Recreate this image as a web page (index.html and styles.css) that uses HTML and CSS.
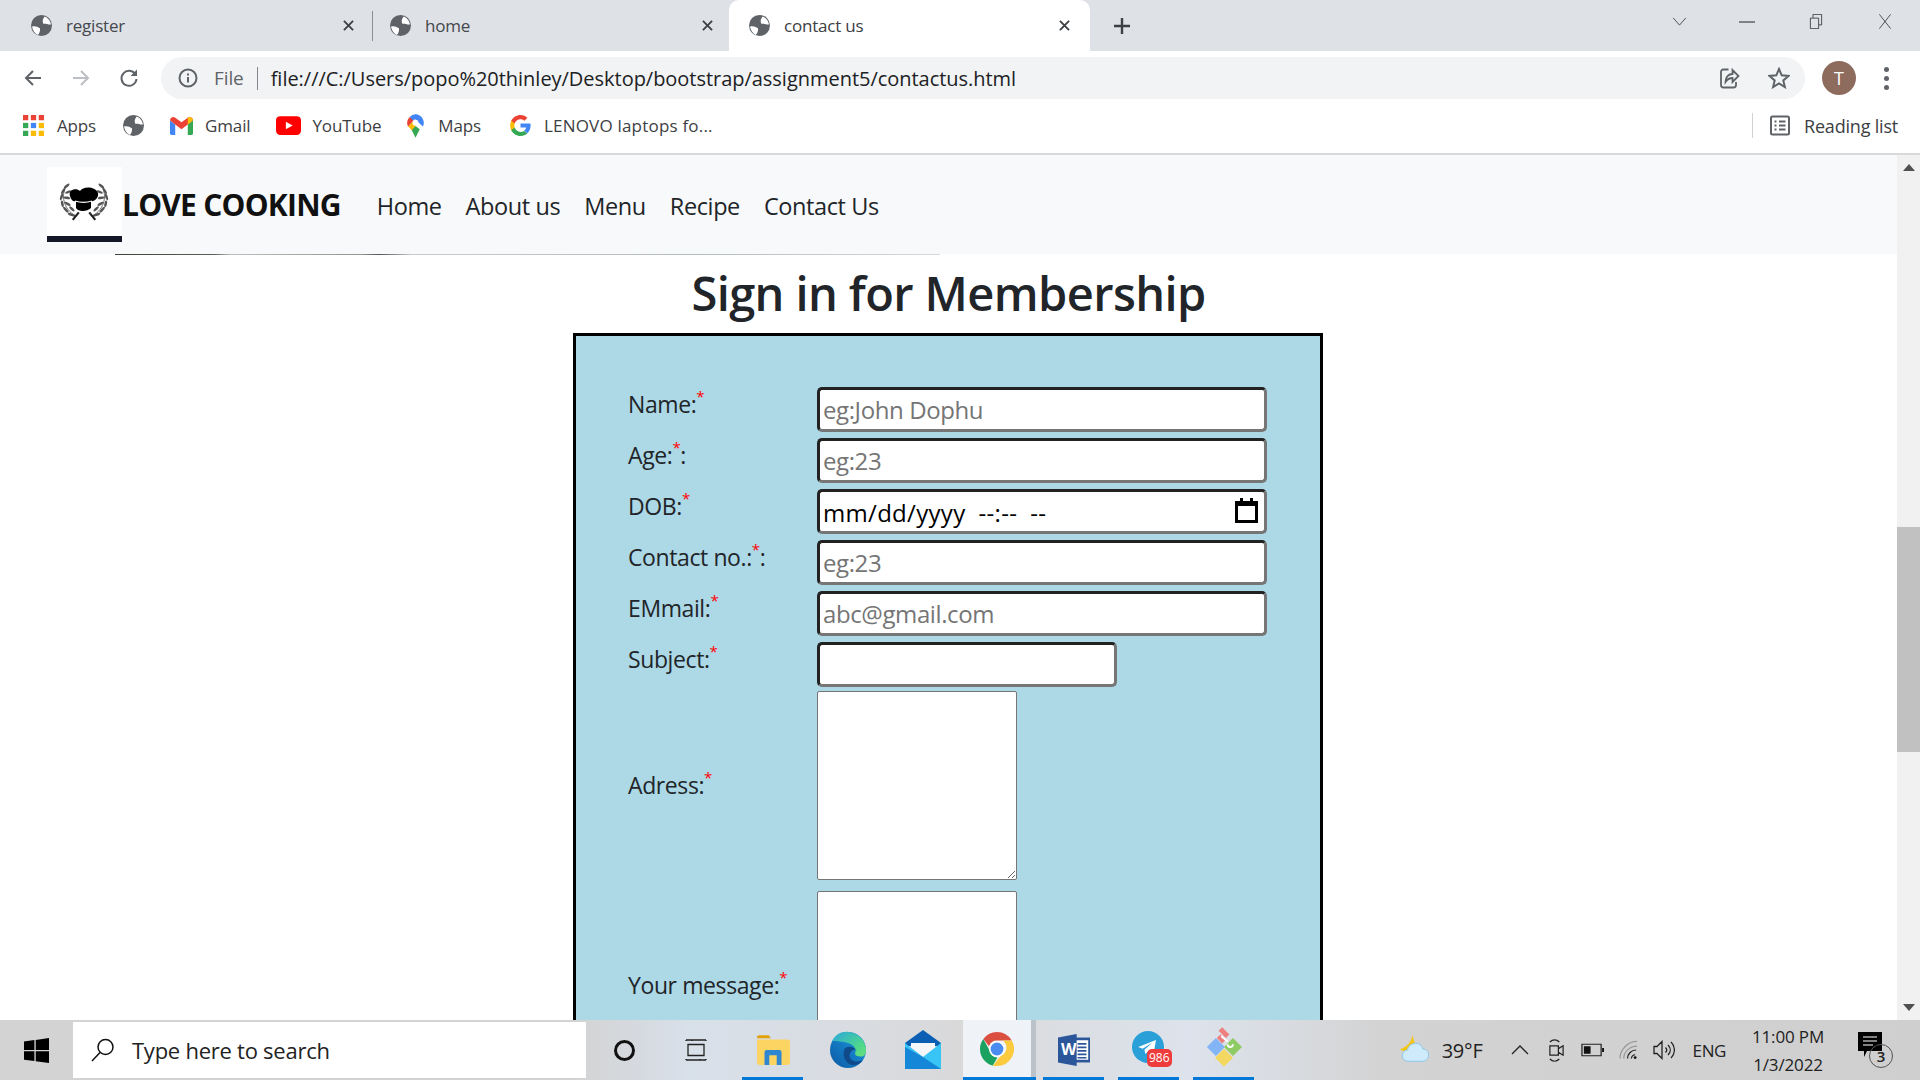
FILE: index.html
```html
<!DOCTYPE html>
<html lang="en">
<head>
    <meta charset="UTF-8">
    <meta name="viewport" content="width=device-width, initial-scale=1.0">
    <title>contact us</title>
    <link rel="stylesheet" href="styles.css">
</head>
<body>
    <svg class="defs" width="0" height="0">
        <symbol id="globe" viewBox="0 0 20 20">
            <circle cx="10" cy="10" r="10" fill="#5f6368"/>
            <path d="M13 1.500C16 2.500 18.500 5.500 19 9 16.500 9.500 14 8 12 8.500 10.500 6.500 11 4 13 1.500zM1 11C3.500 10 6 11 8.500 12.500 9 15 8 17.500 6.500 19 3.500 17.500 1.500 14.500 1 11z" fill="#fff"/>
        </symbol>
    </svg>

    <div class="window">
        <div class="tabbar">
            <div class="tab">
                <svg class="fav"><use href="#globe"/></svg>
                <span class="tab-title">register</span>
                <svg class="tab-x" viewBox="0 0 12 12"><path d="M1 1l10 10M11 1L1 11"/></svg>
            </div>
            <div class="tab-sep"></div>
            <div class="tab">
                <svg class="fav"><use href="#globe"/></svg>
                <span class="tab-title">home</span>
                <svg class="tab-x" viewBox="0 0 12 12"><path d="M1 1l10 10M11 1L1 11"/></svg>
            </div>
            <div class="tab tab-active">
                <svg class="fav"><use href="#globe"/></svg>
                <span class="tab-title">contact us</span>
                <svg class="tab-x" viewBox="0 0 12 12"><path d="M1 1l10 10M11 1L1 11"/></svg>
            </div>
            <svg class="new-tab" viewBox="0 0 16 16"><path d="M8 0v16M0 8h16"/></svg>
            <div class="win-controls">
                <svg class="wc wc-chev" viewBox="0 0 16 10"><path d="M1 1l7 8 7-8"/></svg>
                <svg class="wc wc-min" viewBox="0 0 16 16"><path d="M0 8h16"/></svg>
                <svg class="wc wc-max" viewBox="0 0 16 20"><path d="M.5 5.500h11v14H.5zM4 5V.5h11.500v14H12"/></svg>
                <svg class="wc wc-close" viewBox="0 0 16 20"><path d="M.5 .5l15 19M15.500 .5L.5 19.500"/></svg>
            </div>
        </div>

        <div class="toolbar">
            <svg class="nav-ic" viewBox="0 0 20 20"><path d="M18 10H3M10 3l-7 7 7 7"/></svg>
            <svg class="nav-ic nav-off" viewBox="0 0 20 20"><path d="M2 10h15M10 3l7 7-7 7"/></svg>
            <svg class="nav-ic" viewBox="0 0 20 20"><path d="M16.500 6.500A7.500 7.500 0 1 0 17.500 11"/><path class="solid" d="M18 1.500v6.500h-6.500z"/></svg>
            <div class="omnibox">
                <svg class="info" viewBox="0 0 20 20"><circle cx="10" cy="10" r="8.500"/><path d="M10 9v5.500M10 5.500v2"/></svg>
                <span class="file-tag">File</span>
                <span class="omni-sep"></span>
                <span class="url">file:///C:/Users/popo%20thinley/Desktop/bootstrap/assignment5/contactus.html</span>
                <svg class="omni-ic share" viewBox="0 0 20 22"><path d="M9 2.500H4a2.500 2.500 0 0 0-2.500 2.500v13A2.500 2.500 0 0 0 4 20.500h10a2.500 2.500 0 0 0 2.500-2.500v-3"/><path d="M6 15c0-5 3-8 7-8V3l6 6-6 6v-4c-3 0-5 1-7 4z"/></svg>
                <svg class="omni-ic star" viewBox="0 0 22 22"><path d="M11 2l2.700 6.300 6.800.6-5.200 4.500 1.600 6.700L11 16.500 5.100 20.100l1.600-6.700L1.500 8.900l6.800-.6z"/></svg>
            </div>
            <div class="avatar">T</div>
            <div class="kebab"><i></i><i></i><i></i></div>
        </div>

        <div class="bookmarks">
            <div class="bm bm-apps">
                <svg class="bm-ic" viewBox="0 0 20 20">
                    <path fill="#ea4335" d="M0 0h5v5H0zM7.500 0h5v5h-5zM15 0h5v5h-5z"/>
                    <path fill="#34a853" d="M0 7.500h5v5H0z"/><path fill="#4285f4" d="M7.500 7.500h5v5h-5z"/><path fill="#fbbc05" d="M15 7.500h5v5h-5z"/>
                    <path fill="#34a853" d="M0 15h5v5H0z"/><path fill="#fbbc05" d="M7.500 15h5v5h-5zM15 15h5v5h-5z"/>
                </svg>
                <span>Apps</span>
            </div>
            <div class="bm"><svg class="bm-ic"><use href="#globe"/></svg></div>
            <div class="bm">
                <svg class="bm-ic gmail" viewBox="0 0 22 17">
                    <path fill="#4285f4" d="M0 3v12.500A1.500 1.500 0 0 0 1.500 17H5V7z"/>
                    <path fill="#34a853" d="M17 7v10h3.500a1.500 1.500 0 0 0 1.500-1.500V3z"/>
                    <path fill="#ea4335" d="M0 3c0-2.500 3-4 5-2.500L11 5l6-4.500c2-1.500 5 0 5 2.500l-5 4-6 4.500L5 7z"/>
                    <path fill="#fbbc05" d="M17 .5c2-1.500 5 0 5 2.500l-5 4z"/>
                </svg>
                <span>Gmail</span>
            </div>
            <div class="bm">
                <svg class="bm-ic yt" viewBox="0 0 24 18"><rect width="24" height="18" rx="4" fill="#f00"/><path d="M9.500 5.500l6.500 3.500-6.500 3.500z" fill="#fff"/></svg>
                <span>YouTube</span>
            </div>
            <div class="bm bm-maps">
                <svg class="bm-ic maps" viewBox="0 0 16 22">
                    <path fill="#34a853" d="M4 14l4 8 4-8-4-3z"/>
                    <path fill="#fbbc05" d="M1 11.500L4.500 15l6-7-4.500-2z"/>
                    <path fill="#4285f4" d="M8 0a8 8 0 0 1 7 11.500L10 7 6 3z"/>
                    <path fill="#ea4335" d="M2 3a8 8 0 0 0-1 8.500L6 6l3-4z"/>
                    <path fill="#4285f4" d="M2.500 2.500A8 8 0 0 1 8 0l2 1.500L6 6z"/>
                    <circle cx="8" cy="8" r="2.800" fill="#fff"/>
                </svg>
                <span>Maps</span>
            </div>
            <div class="bm bm-lenovo">
                <svg class="bm-ic" viewBox="0 0 20 20">
                    <path fill="#4285f4" d="M19.600 10.200c0-.7-.1-1.400-.2-2H10v3.800h5.400c-.2 1.200-.9 2.300-2 3l3.100 2.400c1.900-1.700 3.100-4.300 3.100-7.200z"/>
                    <path fill="#34a853" d="M10 20c2.700 0 4.900-.9 6.500-2.400l-3.100-2.400c-.9.600-2 .9-3.400.9-2.600 0-4.800-1.700-5.600-4.100H1.200v2.500C2.800 17.800 6.200 20 10 20z"/>
                    <path fill="#fbbc05" d="M4.400 12c-.4-1.200-.4-2.800 0-4V5.500H1.200c-1.400 2.700-1.400 6.300 0 9z"/>
                    <path fill="#ea4335" d="M10 4c1.500 0 2.800.5 3.800 1.500l2.800-2.800C14.900 1 12.700 0 10 0 6.200 0 2.800 2.200 1.200 5.500L4.400 8C5.200 5.700 7.400 4 10 4z"/>
                </svg>
                <span>LENOVO laptops fo...</span>
            </div>
            <div class="reading">
                <svg class="read-ic" viewBox="0 0 20 20"><rect x="1" y="1" width="18" height="18" rx="1.500"/><path d="M4.500 6h2M9 6h6.500M4.500 10h2M9 10h6.500M4.500 14h2M9 14h6.500"/></svg>
                <span>Reading list</span>
            </div>
        </div>

        <div class="viewport">
            <div class="page">
                <nav class="navbar">
                    <div class="logo">
                        <svg class="logo-art" viewBox="0 0 75 69">
                            <g class="wreath" transform="translate(11 13) scale(.867 .85)">
                                <path d="M10 6C3 18 6 34 20 42M50 6c7 12 4 28-10 36"/>
                                <g class="leaves">
                                    <ellipse cx="10" cy="7" rx="4" ry="1.500" transform="rotate(-40 10 7)"/>
                                    <ellipse cx="6" cy="13" rx="4" ry="1.500" transform="rotate(-60 6 13)"/>
                                    <ellipse cx="12" cy="14" rx="4" ry="1.500" transform="rotate(-20 12 14)"/>
                                    <ellipse cx="4" cy="20" rx="4" ry="1.500" transform="rotate(-75 4 20)"/>
                                    <ellipse cx="10" cy="21" rx="4" ry="1.500" transform="rotate(10 10 21)"/>
                                    <ellipse cx="5" cy="28" rx="4" ry="1.500" transform="rotate(-100 5 28)"/>
                                    <ellipse cx="11" cy="28" rx="4" ry="1.500" transform="rotate(30 11 28)"/>
                                    <ellipse cx="9" cy="35" rx="4.500" ry="1.500" transform="rotate(-130 9 35)"/>
                                    <ellipse cx="16" cy="34" rx="4" ry="1.500" transform="rotate(45 16 34)"/>
                                    <ellipse cx="16" cy="41" rx="5" ry="1.500" transform="rotate(20 16 41)"/>
                                    <ellipse cx="50" cy="7" rx="4" ry="1.500" transform="rotate(40 50 7)"/>
                                    <ellipse cx="54" cy="13" rx="4" ry="1.500" transform="rotate(60 54 13)"/>
                                    <ellipse cx="48" cy="14" rx="4" ry="1.500" transform="rotate(20 48 14)"/>
                                    <ellipse cx="56" cy="20" rx="4" ry="1.500" transform="rotate(75 56 20)"/>
                                    <ellipse cx="50" cy="21" rx="4" ry="1.500" transform="rotate(-10 50 21)"/>
                                    <ellipse cx="55" cy="28" rx="4" ry="1.500" transform="rotate(100 55 28)"/>
                                    <ellipse cx="49" cy="28" rx="4" ry="1.500" transform="rotate(-30 49 28)"/>
                                    <ellipse cx="51" cy="35" rx="4.500" ry="1.500" transform="rotate(130 51 35)"/>
                                    <ellipse cx="44" cy="34" rx="4" ry="1.500" transform="rotate(-45 44 34)"/>
                                    <ellipse cx="44" cy="41" rx="5" ry="1.500" transform="rotate(-20 44 41)"/>
                                </g>
                                <path class="stems" d="M24 38l-7 9M36 38l7 9"/>
                            </g>
                            <path d="M23 29C21 23 29 20 33 24 36 19 48 19 51 26 52 31 47 35 44 34L44 41C40 45 31 45 29 41L29 34C26 35 24 33 23 29z"/>
                            <path class="hat-line" d="M28 34c6 2 11 2 17 0"/>
                        </svg>
                        <div class="logo-strip"></div>
                    </div>
                    <span class="brand">LOVE COOKING</span>
                    <ul class="nav-links">
                        <li>Home</li>
                        <li>About us</li>
                        <li>Menu</li>
                        <li>Recipe</li>
                        <li>Contact Us</li>
                    </ul>
                </nav>
                <div class="banner-edge"></div>
                <h1 class="title">Sign in for Membership</h1>
                <form class="member-form">
                    <div class="row">
                        <label for="name">Name:<sup>*</sup></label>
                        <input id="name" type="text" placeholder="eg:John Dophu">
                    </div>
                    <div class="row">
                        <label for="age">Age:<sup>*</sup>:</label>
                        <input id="age" type="text" placeholder="eg:23">
                    </div>
                    <div class="row">
                        <label for="dob">DOB:<sup>*</sup></label>
                        <div class="date-field">
                            <input id="dob" type="text" value="mm/dd/yyyy  --:--  --">
                            <svg class="cal-ic" viewBox="0 0 23 25"><path d="M1.500 4.500h20v19h-20z"/><path class="cal-top" d="M1.500 3h20v5h-20zM5 0h3v3H5zM15 0h3v3h-3z"/></svg>
                        </div>
                    </div>
                    <div class="row">
                        <label for="contact">Contact no.:<sup>*</sup>:</label>
                        <input id="contact" type="text" placeholder="eg:23">
                    </div>
                    <div class="row">
                        <label for="email">EMmail:<sup>*</sup></label>
                        <input id="email" type="text" placeholder="abc@gmail.com">
                    </div>
                    <div class="row">
                        <label for="subject">Subject:<sup>*</sup></label>
                        <input id="subject" class="short" type="text">
                    </div>
                    <div class="row row-area">
                        <label for="adress">Adress:<sup>*</sup></label>
                        <textarea id="adress"></textarea>
                    </div>
                    <div class="row row-area">
                        <label for="message">Your message:<sup>*</sup></label>
                        <textarea id="message"></textarea>
                    </div>
                </form>
            </div>
            <div class="scrollbar">
                <div class="arrow-up"></div>
                <div class="thumb"></div>
                <div class="arrow-down"></div>
            </div>
        </div>

        <div class="taskbar">
            <div class="start">
                <svg class="win-logo" viewBox="0 0 26 26"><path d="M0 3.700L10.800 2.200V12.500H0zM12.200 2L26 0V12.500H12.200zM0 13.800H10.800V24L0 22.500zM12.200 13.800H26V26L12.200 24.200z"/></svg>
            </div>
            <div class="searchbox">
                <svg class="search-ic" viewBox="0 0 24 24"><circle cx="14.500" cy="9" r="7.500"/><path d="M9 14.500L1 23"/></svg>
                <span>Type here to search</span>
            </div>
            <div class="task-slot slot-cortana"><span class="ring"></span></div>
            <div class="task-slot slot-view">
                <svg class="view-ic" viewBox="0 0 24 24"><path d="M2 2h20M2 22h20M4 6.500h16v11H4z"/><path d="M2 2v1M8 2v1M22 2v1M2 21v1M16 21v1M22 21v1"/></svg>
            </div>
            <div class="task-slot slot-app running">
                <svg class="app-ic" viewBox="0 0 32 30">
                    <path fill="#e3a008" d="M1 3a2 2 0 0 1 2-2h9l2 3h-13z"/>
                    <path fill="#fcd462" d="M1 5h29a2 2 0 0 1 2 2v20a2 2 0 0 1-2 2H3a2 2 0 0 1-2-2z"/>
                    <path fill="#2f86d1" d="M8 17a2 2 0 0 1 2-2h12a2 2 0 0 1 2 2v12h-4.500v-9h-7v9H8z"/>
                </svg>
            </div>
            <div class="task-slot slot-app">
                <svg class="app-ic edge" viewBox="0 0 36 40">
                    <defs>
                        <linearGradient id="edge-a" x1="0" y1="1" x2="1" y2="0"><stop offset="0" stop-color="#0c59a4"/><stop offset="1" stop-color="#1b9de2"/></linearGradient>
                        <linearGradient id="edge-b" x1="0" y1="0" x2="1" y2="1"><stop offset="0" stop-color="#2aa6de"/><stop offset=".7" stop-color="#4fd88a"/><stop offset="1" stop-color="#6ce07a"/></linearGradient>
                    </defs>
                    <circle cx="18" cy="20" r="18" fill="url(#edge-a)"/>
                    <path fill="url(#edge-b)" d="M2 11C6 4 12 1 19 2c9 1 17 9 17 18 0 3-1 6-4 6.500-4 .5-7-1-7-3 1-2 1-5-1-7-5-5-14-5-22-5.500z"/>
                    <path fill="#114a8b" d="M14 20c-2 8 3 16 11 15 3-.5 6-2 8-5-4 2-8 2-11 0-3-2-3-6-1-8 2-3 5-3 6-1-4-6-12-5-13-1z"/>
                </svg>
            </div>
            <div class="task-slot slot-app">
                <svg class="app-ic mail" viewBox="0 0 36 40">
                    <path fill="#0a5fb4" d="M18 0l18 13v3H0v-3z"/>
                    <path fill="#f4f6f8" d="M6 13h24v8l-12 8-12-8z"/>
                    <path fill="#38c5f5" d="M0 13l18 14 18-14v26H0z"/>
                    <path fill="#1487d8" d="M0 39V17l18 10 18 12z"/>
                </svg>
            </div>
            <div class="task-slot slot-chrome">
                <svg class="app-ic chrome" viewBox="0 0 36 36">
                    <path fill="#db4f40" d="M18 0a18 18 0 0 1 15.600 9H18a9 9 0 0 0-8.500 6L3.500 7.500A18 18 0 0 1 18 0z"/>
                    <path fill="#1ba261" d="M3.500 7.500L10.500 20a9 9 0 0 0 8 7l-5 8.600C5.500 33.500 0 26.500 0 18c0-4 1.300-7.500 3.500-10.500z"/>
                    <path fill="#fcca3f" d="M33.600 9A18 18 0 0 1 18 36h-4.500l8.500-11a9 9 0 0 0 2-16z"/>
                    <circle cx="18" cy="18" r="8.500" fill="#fff"/>
                    <circle cx="18" cy="18" r="6.800" fill="#4a8cf0"/>
                </svg>
            </div>
            <div class="task-slot slot-word running">
                <svg class="app-ic word" viewBox="0 0 36 36">
                    <path fill="#fff" d="M18 4h17v28H18z"/>
                    <path fill="#2b579a" d="M18 4h18v28H18zM20 7v22h14V7z"/>
                    <path fill="#2b579a" d="M22 10h10v2H22zM22 14h10v2H22zM22 18h10v2H22zM22 22h10v2H22zM22 26h10v1.500H22z"/>
                    <path fill="#2b579a" d="M0 4l21-4v36L0 32z"/>
                    <text x="3.500" y="24" class="word-w">W</text>
                </svg>
            </div>
            <div class="task-slot slot-tele running">
                <svg class="app-ic tele" viewBox="0 0 36 36">
                    <circle cx="18" cy="18" r="18" fill="#2b9fd8"/>
                    <path fill="#fff" d="M7 18l20-8-3 17-6-4-3 3-1-5 9-8-11 7z"/>
                </svg>
                <span class="tele-badge">986</span>
            </div>
            <div class="task-slot slot-git running">
                <svg class="app-ic git" viewBox="0 0 40 44">
                    <path fill="#82b4f6" d="M11 12l10 10-10 10L1 22z"/>
                    <path fill="#8fcb63" d="M30 12l10 10-10 10-10-10z"/>
                    <path fill="#f2d861" d="M20 24l10 10-10 10-10-10z"/>
                    <path fill="#ee7f7f" d="M14 4l4-4 8 8-4 4zM12 12l4-4 6 6-4 4z"/>
                    <path fill="none" stroke="#fff" stroke-width="2" d="M17 10l7 6M24 19a3 3 0 1 0 6 0"/>
                </svg>
            </div>

            <div class="tray">
                <svg class="weather" viewBox="0 0 34 32">
                    <path fill="#f5c518" d="M15 0C15 6 10 13 2 15 6 19 16 18 19 12z"/>
                    <path fill="#cfeafa" stroke="#86c8ea" d="M11 28a6 6 0 0 1-1-12c1-6 8-9 13-6 2 1 3 3 3.500 5 4 0 6 3 6 6.500s-3 6.500-6 6.500z"/>
                </svg>
                <span class="temp">39°F</span>
                <svg class="tray-ic chev-up" viewBox="0 0 18 10"><path d="M1 9l8-8 8 8"/></svg>
                <svg class="tray-ic meet" viewBox="0 0 18 26"><path d="M2 8h9v10H2zM11 11l5-3v10l-5-3zM2 4c3-3 7-3 10 0M2 22c3 3 7 3 10 0"/></svg>
                <svg class="tray-ic batt" viewBox="0 0 24 14"><path d="M1 1h20v12H1z"/><path class="solid" d="M3 3h7v8H3zM22 5h2v4h-2z"/></svg>
                <svg class="tray-ic wifi" viewBox="0 0 20 20"><path class="dim" d="M1 19C1 10 9 1 19 1M5 19c0-7 6-13 14-13"/><path d="M9 19c0-5 4-9 9-9M13 19c0-2 2-4 4-4"/><circle class="solid" cx="17" cy="18" r="1.500"/></svg>
                <svg class="tray-ic vol" viewBox="0 0 22 20"><path d="M1 6.500h3L9 1.500v17l-5-5H1zM12.500 7.500c1.500 1.500 1.500 3.500 0 5M15 5c3 3 3 7 0 10M18 2c4.500 4.500 4.500 11.500 0 16"/></svg>
                <span class="lang">ENG</span>
                <div class="clock"><span>11:00 PM</span><span>1/3/2022</span></div>
                <div class="notif">
                    <svg class="notif-ic" viewBox="0 0 24 26"><path d="M0 0h24v19H9l-3 6v-6H0z"/><path class="notif-lines" d="M5 5h14M5 9h14M5 13h10"/></svg>
                    <span class="notif-count">3</span>
                </div>
            </div>
        </div>
    </div>
</body>
</html>
```

FILE: styles.css
```css
* {
    box-sizing: border-box;
}
html, body {
    margin: 0;
    height: 100%;
    overflow: hidden;
}
body {
    font-family: "Open Sans", "Noto Sans", sans-serif;
    color: #212529;
}
.defs {
    position: absolute;
}
.window {
    display: flex;
    flex-direction: column;
    height: 1080px;
    width: 1920px;
}

/* tab strip */
.tabbar {
    display: flex;
    align-items: center;
    height: 51px;
    background-color: #dee1e6;
    flex-shrink: 0;
}
.tab {
    display: flex;
    align-items: center;
    width: 359px;
    height: 51px;
    padding: 0 5px 0 31px;
    font-size: 17px;
    color: #45484d;
    letter-spacing: -0.2px;
}
.tab-active {
    width: 361px;
    margin-left: 11px;
    padding: 0 20px 0 20px;
    background-color: #fff;
    border-radius: 10px 10px 0 0;
    color: #3c4043;
}
.fav {
    width: 21px;
    height: 21px;
    flex-shrink: 0;
}
.tab-title {
    margin-left: 14px;
    flex: 1;
}
.tab-x {
    width: 11px;
    height: 11px;
    fill: none;
    stroke: #3c4043;
    stroke-width: 2;
}
.tab-sep {
    width: 1px;
    height: 30px;
    background-color: #8a8d91;
    margin-left: 13px;
    margin-right: -14px;
}
.new-tab {
    width: 16px;
    height: 16px;
    margin-left: 24px;
    fill: none;
    stroke: #3c4043;
    stroke-width: 2.400;
}
.win-controls {
    display: flex;
    align-items: center;
    margin-left: auto;
    margin-top: -8px;
    padding-right: 27px;
}
.wc {
    fill: none;
    stroke: #222;
    stroke-width: 1;
}
.wc-chev {
    width: 15px;
    height: 9px;
    margin-right: 52px;
    stroke: #444;
}
.wc-min {
    width: 16px;
    height: 16px;
    margin-right: 53px;
}
.wc-max {
    width: 16px;
    height: 15px;
    margin-right: 53px;
}
.wc-close {
    width: 16px;
    height: 15px;
}

/* address bar */
.toolbar {
    display: flex;
    align-items: center;
    height: 51px;
    padding: 3px 0 0 23px;
    background-color: #fff;
    flex-shrink: 0;
}
.nav-ic {
    width: 20px;
    height: 20px;
    margin-right: 28px;
    fill: none;
    stroke: #5f6368;
    stroke-width: 2;
    flex-shrink: 0;
}
.nav-off {
    stroke: #bcbfc3;
}
.nav-ic .solid {
    fill: #5f6368;
    stroke: none;
}
.omnibox {
    display: flex;
    align-items: center;
    width: 1644px;
    height: 42px;
    margin-left: -6px;
    padding: 0 10px 0 17px;
    background-color: #f1f3f4;
    border-radius: 21px;
}
.info {
    width: 20px;
    height: 20px;
    fill: none;
    stroke: #5f6368;
    stroke-width: 2;
}
.file-tag {
    margin-left: 16px;
    font-size: 19px;
    color: #5f6368;
    letter-spacing: -0.1px;
}
.omni-sep {
    width: 1px;
    height: 23px;
    margin: 0 13px;
    background-color: #80868b;
}
.url {
    font-size: 20px;
    color: #202124;
    letter-spacing: -0.03px;
    white-space: nowrap;
}
.omni-ic {
    fill: none;
    stroke: #5f6368;
    stroke-width: 1.800;
}
.share {
    width: 21px;
    height: 22px;
    margin-left: auto;
    margin-right: 28px;
}
.star {
    width: 22px;
    height: 22px;
    margin-right: 5px;
    stroke-width: 2;
}
.avatar {
    display: flex;
    align-items: center;
    justify-content: center;
    width: 34px;
    height: 34px;
    margin-left: 17px;
    border-radius: 50%;
    background-color: #8d6b5d;
    color: #fff;
    font-size: 18px;
}
.kebab {
    display: flex;
    flex-direction: column;
    gap: 4px;
    margin-left: 28px;
}
.kebab i {
    width: 5px;
    height: 5px;
    border-radius: 50%;
    background-color: #5f6368;
}

/* bookmarks bar */
.bookmarks {
    display: flex;
    align-items: center;
    height: 53px;
    padding: 0 0 4px 23px;
    background-color: #fff;
    border-bottom: 2px solid #d9d9d9;
    font-size: 17px;
    letter-spacing: -0.15px;
    color: #3c4043;
    flex-shrink: 0;
}
.bm {
    display: flex;
    align-items: center;
    gap: 12px;
    margin-right: 26px;
}
.bm-apps {
    gap: 13px;
    margin-right: 27px;
}
.bm-maps {
    gap: 14px;
    margin-right: 29px;
}
.bm-lenovo {
    gap: 13px;
    letter-spacing: 0.2px;
}
.bm-ic {
    width: 21px;
    height: 21px;
    flex-shrink: 0;
}
.gmail {
    width: 23px;
    height: 18px;
}
.yt {
    width: 25px;
    height: 19px;
    margin-right: -1px;
}
.maps {
    width: 17px;
    height: 24px;
}
.reading {
    display: flex;
    align-items: center;
    margin-left: auto;
    padding-left: 17px;
    margin-right: 22px;
    border-left: 1px solid #d0d2d4;
    height: 25px;
    font-size: 18px;
    letter-spacing: -0.2px;
    white-space: nowrap;
}
.read-ic {
    width: 20px;
    height: 21px;
    margin-right: 14px;
    fill: none;
    stroke: #5f6368;
    stroke-width: 2;
}

/* page */
.viewport {
    display: flex;
    flex: 1;
    min-height: 0;
}
.page {
    flex: 1;
    overflow: hidden;
    background-color: #fff;
}
.navbar {
    display: flex;
    align-items: center;
    height: 99px;
    padding-left: 47px;
    background-color: #f8f9fa;
}
.logo {
    display: flex;
    flex-direction: column;
    width: 75px;
    height: 75px;
    margin-top: -1px;
    background-color: #fff;
}
.logo-art {
    flex: 1;
    min-height: 0;
}
.wreath path {
    fill: none;
    stroke: #555;
    stroke-width: 1;
}
.leaves {
    fill: #555;
}
.wreath .stems {
    stroke: #222;
    stroke-width: 2.500;
}
.hat-line {
    fill: none;
    stroke: #fff;
    stroke-width: 1.200;
}
.logo-strip {
    height: 6px;
    background-color: #141727;
}
.brand {
    font-size: 30px;
    font-weight: 700;
    color: #111;
    letter-spacing: -0.75px;
}
.nav-links {
    display: flex;
    gap: 24px;
    list-style: none;
    margin: 3px 0 0 36px;
    padding: 0;
    font-size: 23.5px;
    letter-spacing: -0.4px;
}
.banner-edge {
    width: 825px;
    height: 1px;
    margin-left: 115px;
    background: linear-gradient(90deg, #3b4438, #59625a 12%, #b9c0bb 14%, #8d958f 30%, #555 32%, #c6cccc 36%, #b3bcbc 70%, #d5dadb 100%);
}
.title {
    margin: 0;
    height: 78px;
    line-height: 76px;
    text-align: center;
    font-size: 47px;
    font-weight: 600;
    letter-spacing: -0.6px;
}
.member-form {
    width: 750px;
    margin: 0 0 0 573px;
    padding: 51px 0 40px 52px;
    background-color: #add8e6;
    border: 3px solid #000;
}
.row {
    display: flex;
    align-items: flex-start;
    margin-bottom: 6px;
}
.row label {
    width: 189px;
    line-height: 34px;
    font-size: 23px;
    letter-spacing: -0.4px;
}
.row-area label {
    margin-top: -2px;
}
sup {
    color: #f00;
    font-size: 15px;
    line-height: 0;
    vertical-align: 11px;
}
.row input {
    width: 450px;
    height: 45px;
    padding: 0 3px 1px;
    background-color: #fff;
    border-style: solid;
    border-width: 3px;
    border-color: #222 #767676 #767676 #222;
    border-radius: 5px;
    font-family: inherit;
    font-size: 24px;
    letter-spacing: -0.4px;
    color: #000;
    outline: none;
}
.row input::placeholder {
    color: #757575;
}
.row input.short {
    width: 300px;
    margin-bottom: -2px;
}
.date-field {
    position: relative;
    height: 45px;
}
.row .date-field input {
    letter-spacing: 0.3px;
    padding-top: 2px;
    padding-bottom: 0;
}
.cal-ic {
    position: absolute;
    top: 9px;
    right: 9px;
    width: 23px;
    height: 25px;
    fill: none;
    stroke: #000;
    stroke-width: 3;
}
.cal-top {
    fill: #000;
    stroke: none;
}
.row-area {
    align-items: center;
    margin-top: 4px;
    margin-bottom: 11px;
}
.row-area + .row-area {
    margin-top: 0;
}
.row textarea {
    width: 200px;
    height: 189px;
    border: 1px solid #767676;
    border-radius: 2px;
    background-color: #fff;
}

/* scrollbar */
.scrollbar {
    display: flex;
    flex-direction: column;
    align-items: center;
    width: 23px;
    background-color: #f1f1f1;
}
.arrow-up {
    width: 0;
    height: 0;
    margin-top: 9px;
    border-left: 6px solid transparent;
    border-right: 6px solid transparent;
    border-bottom: 7px solid #505050;
}
.thumb {
    width: 100%;
    height: 225px;
    margin-top: 356px;
    background-color: #c1c1c1;
}
.arrow-down {
    width: 0;
    height: 0;
    margin-top: auto;
    margin-bottom: 9px;
    border-left: 6px solid transparent;
    border-right: 6px solid transparent;
    border-top: 7px solid #505050;
}

/* windows taskbar */
.taskbar {
    display: flex;
    align-items: stretch;
    height: 60px;
    background: linear-gradient(90deg, #d3d3d3 0, #d3d3d3 30%, #d8e0ea 36%, #d9d9da 50%, #dde3ec 62%, #d3d3d3 72%, #cfcfcf 100%);
    flex-shrink: 0;
}
.start {
    display: flex;
    align-items: center;
    justify-content: center;
    width: 73px;
}
.win-logo {
    width: 25px;
    height: 25px;
    fill: #000;
}
.searchbox {
    display: flex;
    align-items: center;
    gap: 17px;
    width: 513px;
    margin: 2px 0;
    padding-left: 18px;
    background-color: #fff;
    font-size: 22px;
    letter-spacing: -0.25px;
    color: #222;
}
.search-ic {
    width: 24px;
    height: 24px;
    fill: none;
    stroke: #111;
    stroke-width: 1.500;
}
.task-slot {
    position: relative;
    display: flex;
    align-items: center;
    justify-content: center;
}
.slot-cortana {
    width: 76px;
}
.ring {
    width: 21px;
    height: 21px;
    border: 3px solid #111;
    border-radius: 50%;
}
.slot-view {
    width: 68px;
}
.view-ic {
    width: 24px;
    height: 24px;
    fill: none;
    stroke: #222;
    stroke-width: 1.300;
}
.slot-app {
    width: 61px;
    margin-right: 14px;
}
.slot-view + .slot-app {
    margin-left: 12px;
}
.app-ic {
    width: 34px;
    height: 32px;
}
.edge, .mail {
    width: 36px;
    height: 40px;
}
.slot-chrome {
    width: 73px;
    margin-left: -4px;
    margin-right: 7px;
    background-color: #eff2f6;
    border-right: 5px solid #bcc2c9;
}
.slot-word, .slot-tele, .slot-git {
    width: 61px;
    margin-right: 14px;
}
.running::after, .slot-chrome::after {
    content: "";
    position: absolute;
    left: 0;
    right: 0;
    bottom: 0;
    height: 3px;
    background-color: #0078d7;
}
.slot-chrome::after {
    right: -5px;
}
.chrome {
    width: 34px;
    height: 34px;
    margin-top: -2px;
}
.word {
    width: 32px;
    height: 34px;
}
.word-w {
    font-family: "Open Sans", sans-serif;
    font-weight: 700;
    font-size: 18px;
    fill: #fff;
}
.tele {
    width: 32px;
    height: 32px;
    margin: -6px 2px 0 0;
}
.tele-badge {
    position: absolute;
    left: 29px;
    top: 29px;
    padding: 0 2px;
    font-size: 12px;
    line-height: 18px;
    color: #fff;
    background-color: #ee3b3b;
    border-radius: 5px;
}
.git {
    width: 36px;
    height: 40px;
    margin-top: -6px;
}
.tray {
    display: flex;
    align-items: center;
    margin-left: auto;
    padding-right: 26px;
    font-size: 18px;
    color: #222;
}
.weather {
    width: 32px;
    height: 30px;
    margin-right: 12px;
}
.temp {
    font-size: 20px;
    letter-spacing: -0.2px;
    margin-right: 28px;
}
.tray-ic {
    fill: none;
    stroke: #222;
    stroke-width: 1.300;
    flex-shrink: 0;
}
.tray-ic .solid {
    fill: #111;
    stroke: none;
}
.tray-ic .dim {
    stroke: #999;
}
.chev-up {
    width: 18px;
    height: 10px;
    margin-right: 19px;
}
.meet {
    width: 17px;
    height: 25px;
    margin-right: 16px;
}
.batt {
    width: 23px;
    height: 14px;
    margin-right: 15px;
}
.wifi {
    width: 19px;
    height: 20px;
    margin-right: 15px;
}
.vol {
    width: 22px;
    height: 20px;
    margin-right: 18px;
}
.lang {
    font-size: 17px;
    letter-spacing: -0.4px;
    margin-right: 25px;
}
.clock {
    display: flex;
    flex-direction: column;
    align-items: center;
    gap: 5px;
    width: 74px;
    font-size: 17px;
    line-height: 23px;
    letter-spacing: -0.15px;
    white-space: nowrap;
}
.notif {
    position: relative;
    width: 36px;
    height: 36px;
    margin-left: 33px;
}
.notif-ic {
    width: 24px;
    height: 26px;
    fill: #000;
}
.notif-lines {
    fill: none;
    stroke: #fff;
    stroke-width: 1.200;
}
.notif-count {
    position: absolute;
    left: 11px;
    top: 12px;
    width: 24px;
    height: 24px;
    line-height: 22px;
    text-align: center;
    border: 1px solid #555;
    border-radius: 50%;
    font-size: 15px;
    font-weight: 600;
}
```
